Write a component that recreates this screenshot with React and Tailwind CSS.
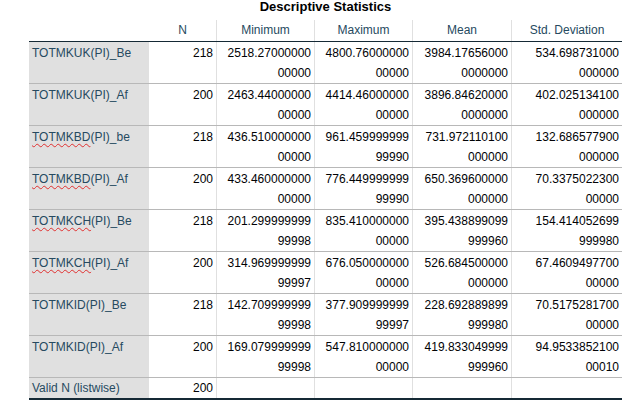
const rows = [
  ['TOTMKUK(PI)_Be', false, '218', ['2518.27000000', '00000'], ['4800.76000000', '00000'], ['3984.17656000', '0000000'], ['534.698731000', '000000']],
  ['TOTMKUK(PI)_Af', false, '200', ['2463.44000000', '00000'], ['4414.46000000', '00000'], ['3896.84620000', '0000000'], ['402.025134100', '000000']],
  ['TOTMKBD(PI)_be', true, '218', ['436.510000000', '00000'], ['961.459999999', '99990'], ['731.972110100', '000000'], ['132.686577900', '000000']],
  ['TOTMKBD(PI)_Af', true, '200', ['433.460000000', '00000'], ['776.449999999', '99990'], ['650.369600000', '000000'], ['70.3375022300', '00000']],
  ['TOTMKCH(PI)_Be', true, '218', ['201.299999999', '99998'], ['835.410000000', '00000'], ['395.438899099', '999960'], ['154.414052699', '999980']],
  ['TOTMKCH(PI)_Af', true, '200', ['314.969999999', '99997'], ['676.050000000', '00000'], ['526.684500000', '000000'], ['67.4609497700', '00000']],
  ['TOTMKID(PI)_Be', false, '218', ['142.709999999', '99998'], ['377.909999999', '99997'], ['228.692889899', '999980'], ['70.5175281700', '00000']],
  ['TOTMKID(PI)_Af', false, '200', ['169.079999999', '99998'], ['547.810000000', '00000'], ['419.833049999', '999960'], ['94.9533852100', '00010']],
]

const cols = 'grid grid-cols-[120px_68px_98px_98px_99px_110px]'

function Label({ text, wavy }) {
  if (!wavy) return <span>{text}</span>
  const [a, b] = [text.slice(0, 7), text.slice(7)]
  return (
    <span>
      <span className="underline decoration-wavy decoration-[#e03030] decoration-1 underline-offset-2">{a}</span>
      {b}
    </span>
  )
}

export default function App() {
  return (
    <div className="w-[642px] h-[412px] bg-white text-[12px] leading-[20px] text-[#010205]" style={{ fontFamily: '"Liberation Sans", Arial, sans-serif' }}>
      <div className="h-[20px] pl-[29px] w-[622px] text-center font-bold text-[13px] leading-[14px] text-black">Descriptive Statistics</div>
      <div className="ml-[29px] w-[593px]">
        <div className={`${cols} h-[22px] border-b border-[#152935] text-[#264a60]`}>
          <div />
          <div className="text-center border-r border-[#e0e0e0] leading-[20px]">N</div>
          <div className="text-center border-r border-[#e0e0e0] leading-[20px]">Minimum</div>
          <div className="text-center border-r border-[#e0e0e0] leading-[20px]">Maximum</div>
          <div className="text-center border-r border-[#e0e0e0] leading-[20px]">Mean</div>
          <div className="text-center leading-[20px]">Std. Deviation</div>
        </div>
        {rows.map(([label, wavy, n, ...vals], i) => (
          <div key={i} className={`${cols} h-[42px] border-b border-[#b8b8b8]`}>
            <div className="bg-[#e0e0e0] text-[#264a60] px-[3px] pt-[1px]"><Label text={label} wavy={wavy} /></div>
            <div className="text-right pr-[3px] pt-[1px] border-r border-[#e0e0e0]">{n}</div>
            {vals.map((v, j) => (
              <div key={j} className={`text-right pr-[3px] pt-[1px] ${j < 3 ? 'border-r border-[#e0e0e0]' : ''}`}>
                <div>{v[0]}</div>
                <div>{v[1]}</div>
              </div>
            ))}
          </div>
        ))}
        <div className={`${cols} h-[22px] border-b-2 border-[#152935]`}>
          <div className="bg-[#e0e0e0] text-[#264a60] px-[3px]">Valid N (listwise)</div>
          <div className="text-right pr-[3px] border-r border-[#e0e0e0]">200</div>
          <div className="border-r border-[#e0e0e0]" />
          <div className="border-r border-[#e0e0e0]" />
          <div className="border-r border-[#e0e0e0]" />
          <div />
        </div>
      </div>
    </div>
  )
}
